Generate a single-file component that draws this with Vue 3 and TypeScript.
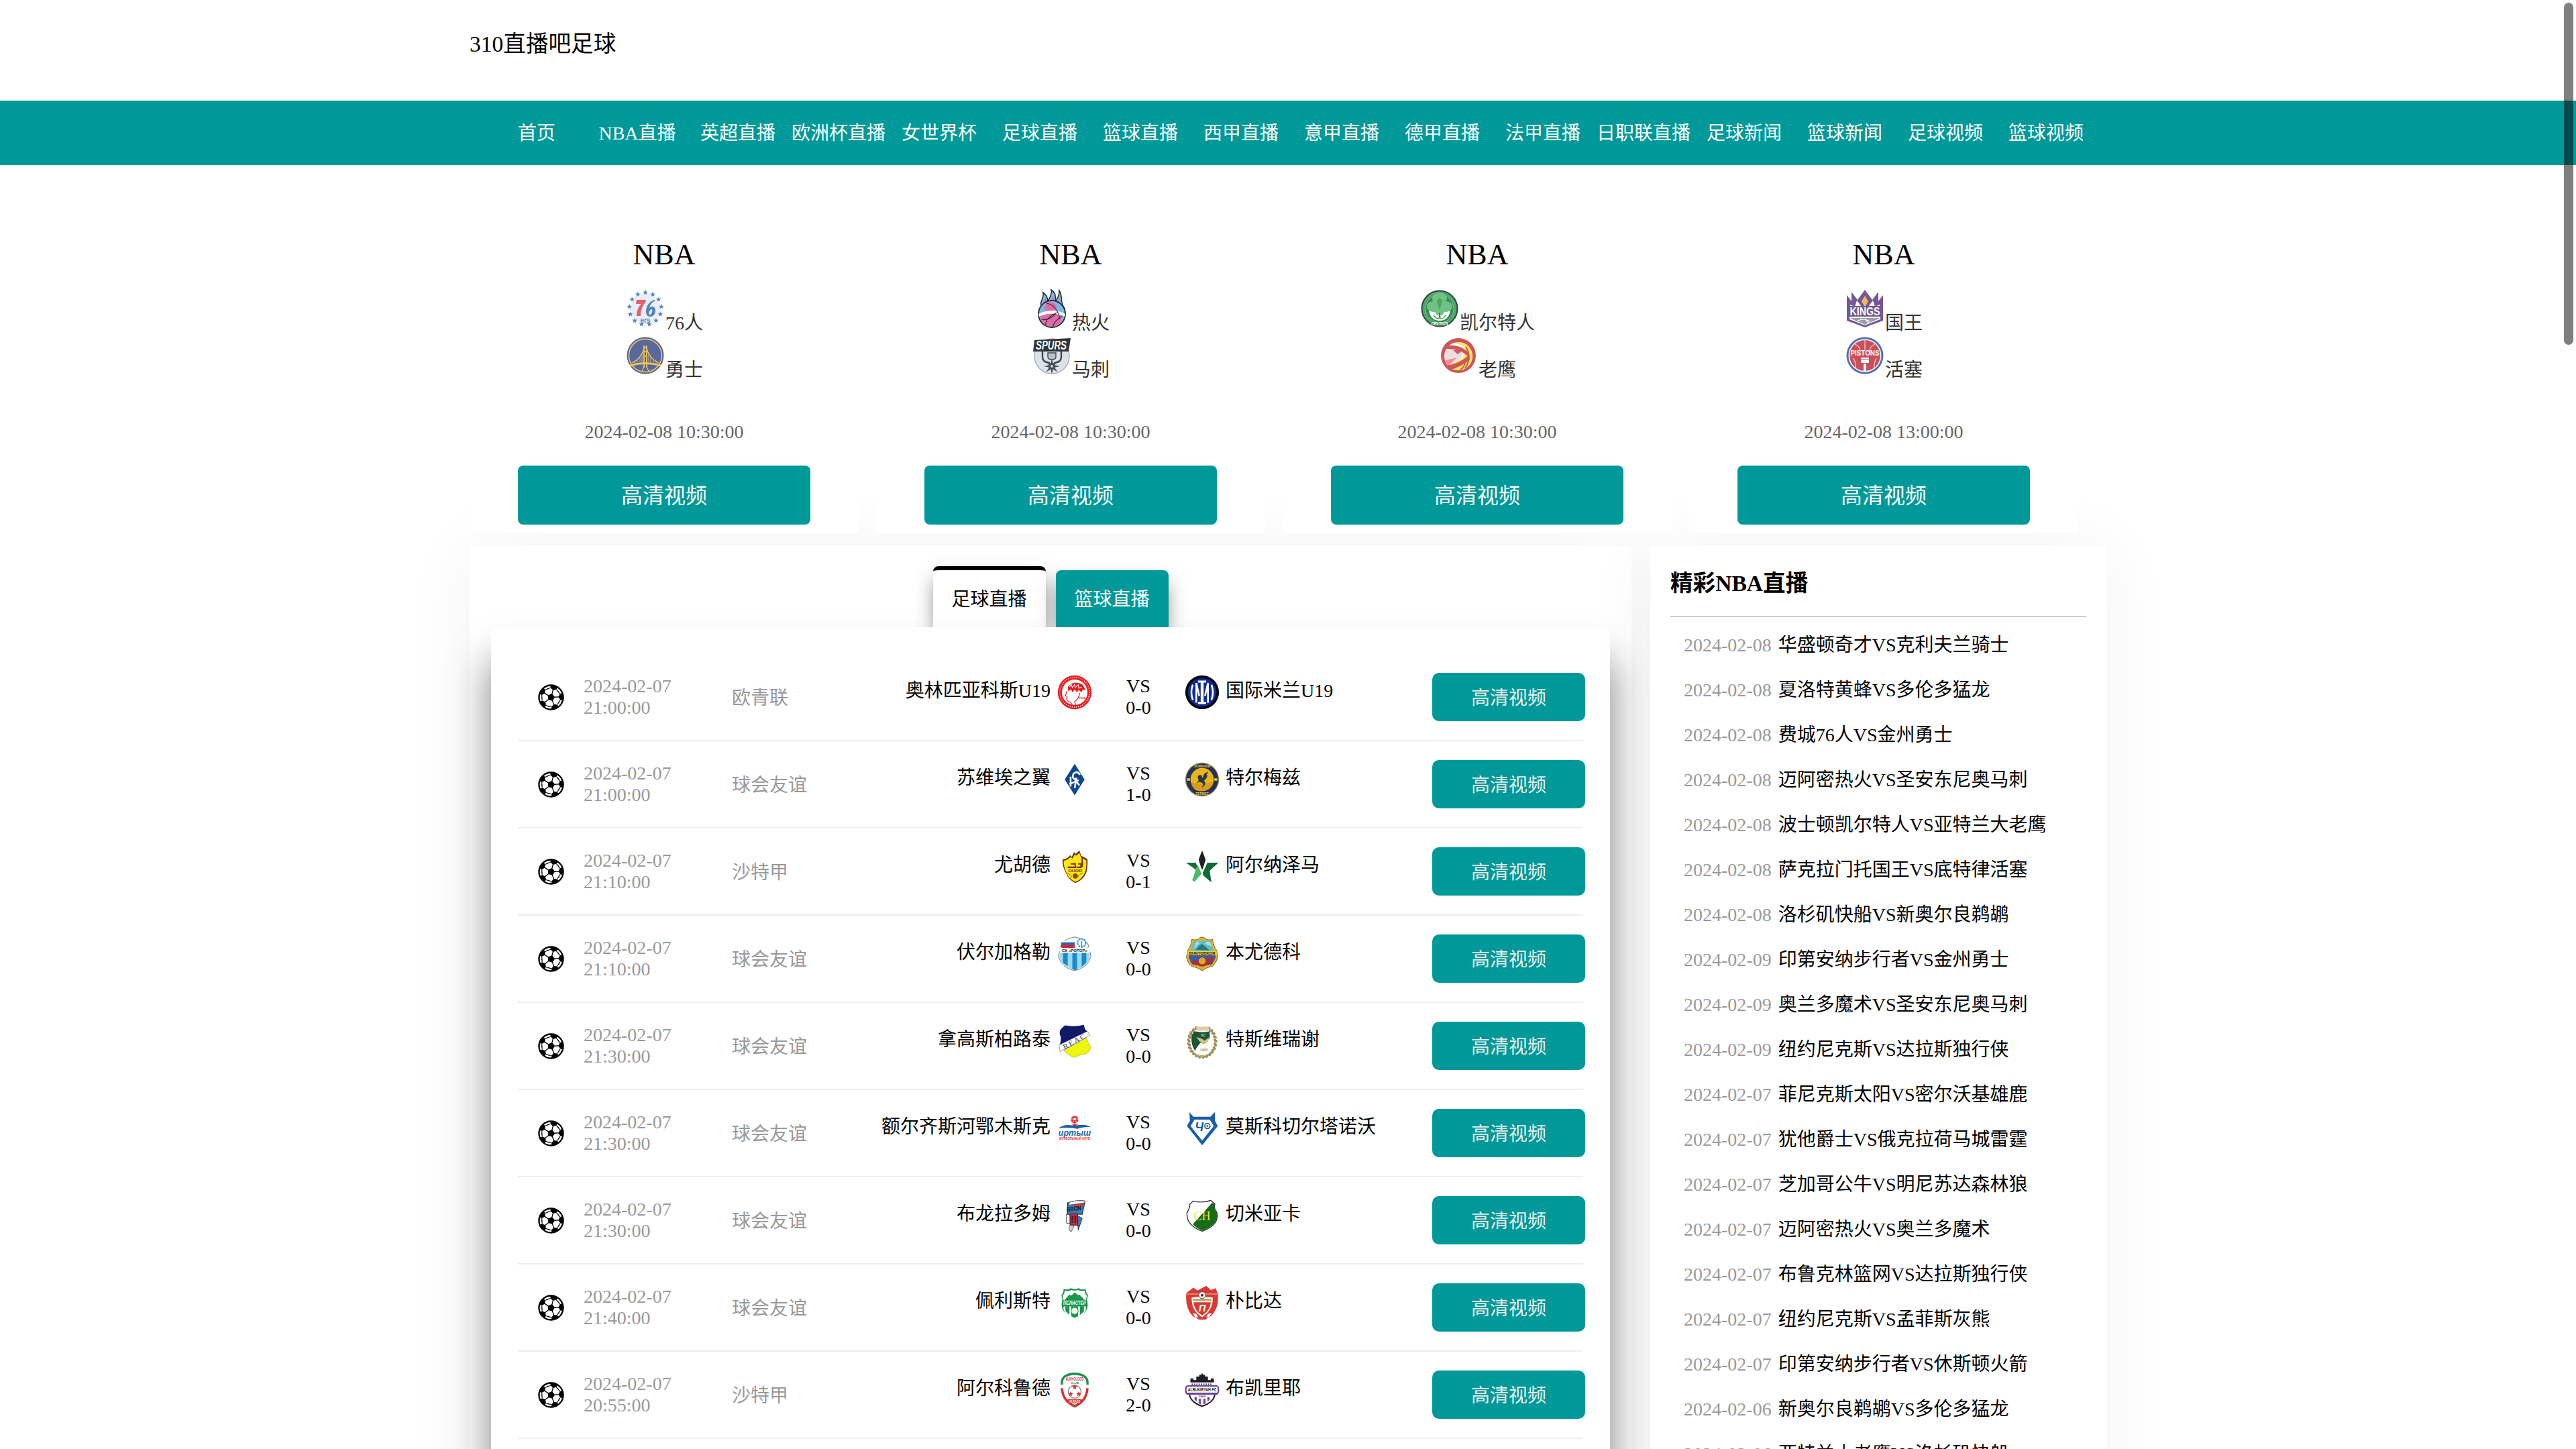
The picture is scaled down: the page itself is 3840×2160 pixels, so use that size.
<script setup lang="ts">
interface FeaturedGame {
  teams: { name: string; crest: string }[]
  time: string
}
interface Match {
  date: string
  time: string
  league: string
  home: string
  homeCrest: string
  score: string
  away: string
  awayCrest: string
}

const navItems: string[] = [
  '首页', 'NBA直播', '英超直播', '欧洲杯直播', '女世界杯', '足球直播', '篮球直播', '西甲直播',
  '意甲直播', '德甲直播', '法甲直播', '日职联直播', '足球新闻', '篮球新闻', '足球视频', '篮球视频',
]

const featured: FeaturedGame[] = [
  { teams: [{ name: '76人', crest: 'sixers' }, { name: '勇士', crest: 'warriors' }], time: '2024-02-08 10:30:00' },
  { teams: [{ name: '热火', crest: 'heat' }, { name: '马刺', crest: 'spurs' }], time: '2024-02-08 10:30:00' },
  { teams: [{ name: '凯尔特人', crest: 'celtics' }, { name: '老鹰', crest: 'hawks' }], time: '2024-02-08 10:30:00' },
  { teams: [{ name: '国王', crest: 'kings' }, { name: '活塞', crest: 'pistons' }], time: '2024-02-08 13:00:00' },
]

const day = '2024-02-07'
const matches: Match[] = [
  { date: day, time: '21:00:00', league: '欧青联', home: '奥林匹亚科斯U19', homeCrest: 'olympiacos', score: '0-0', away: '国际米兰U19', awayCrest: 'inter' },
  { date: day, time: '21:00:00', league: '球会友谊', home: '苏维埃之翼', homeCrest: 'krylia', score: '1-0', away: '特尔梅兹', awayCrest: 'surkhon' },
  { date: day, time: '21:10:00', league: '沙特甲', home: '尤胡德', homeCrest: 'ohod', score: '0-1', away: '阿尔纳泽马', awayCrest: 'najma' },
  { date: day, time: '21:10:00', league: '球会友谊', home: '伏尔加格勒', homeCrest: 'rotor', score: '0-0', away: '本尤德科', awayCrest: 'bunyodkor' },
  { date: day, time: '21:30:00', league: '球会友谊', home: '拿高斯柏路泰', homeCrest: 'reac', score: '0-0', away: '特斯维瑞谢', awayCrest: 'legion' },
  { date: day, time: '21:30:00', league: '球会友谊', home: '额尔齐斯河鄂木斯克', homeCrest: 'irtysh', score: '0-0', away: '莫斯科切尔塔诺沃', awayCrest: 'chertanovo' },
  { date: day, time: '21:30:00', league: '球会友谊', home: '布龙拉多姆', homeCrest: 'bron', score: '0-0', away: '切米亚卡', awayCrest: 'chelm' },
  { date: day, time: '21:40:00', league: '球会友谊', home: '佩利斯特', homeCrest: 'pelister', score: '0-0', away: '朴比达', awayCrest: 'pobeda' },
  { date: day, time: '20:55:00', league: '沙特甲', home: '阿尔科鲁德', homeCrest: 'kholood', score: '2-0', away: '布凯里耶', awayCrest: 'bukiryah' },
]

const schedule: [string, string][] = [
  ['2024-02-08', '华盛顿奇才VS克利夫兰骑士'],
  ['2024-02-08', '夏洛特黄蜂VS多伦多猛龙'],
  ['2024-02-08', '费城76人VS金州勇士'],
  ['2024-02-08', '迈阿密热火VS圣安东尼奥马刺'],
  ['2024-02-08', '波士顿凯尔特人VS亚特兰大老鹰'],
  ['2024-02-08', '萨克拉门托国王VS底特律活塞'],
  ['2024-02-08', '洛杉矶快船VS新奥尔良鹈鹕'],
  ['2024-02-09', '印第安纳步行者VS金州勇士'],
  ['2024-02-09', '奥兰多魔术VS圣安东尼奥马刺'],
  ['2024-02-09', '纽约尼克斯VS达拉斯独行侠'],
  ['2024-02-07', '菲尼克斯太阳VS密尔沃基雄鹿'],
  ['2024-02-07', '犹他爵士VS俄克拉荷马城雷霆'],
  ['2024-02-07', '芝加哥公牛VS明尼苏达森林狼'],
  ['2024-02-07', '迈阿密热火VS奥兰多魔术'],
  ['2024-02-07', '布鲁克林篮网VS达拉斯独行侠'],
  ['2024-02-07', '纽约尼克斯VS孟菲斯灰熊'],
  ['2024-02-07', '印第安纳步行者VS休斯顿火箭'],
  ['2024-02-06', '新奥尔良鹈鹕VS多伦多猛龙'],
  ['2024-02-06', '亚特兰大老鹰VS洛杉矶快船'],
]

const rad = Math.PI / 180

function poly(cx: number, cy: number, r: number, n: number, start = -90, inner = 0): string {
  const pts: string[] = []
  const total = inner ? n * 2 : n
  for (let i = 0; i < total; i++) {
    const radius = inner && i % 2 ? inner : r
    const a = (start + (i * 360) / total) * rad
    pts.push(`${(cx + radius * Math.cos(a)).toFixed(1)},${(cy + radius * Math.sin(a)).toFixed(1)}`)
  }
  return pts.join(' ')
}

function sixersStars(): string {
  let out = ''
  for (let i = 0; i < 13; i++) {
    const a = (-90 + (i * 360) / 13) * rad
    out += `<polygon fill="#4a86c5" points="${poly(30 + 24 * Math.cos(a), 30 + 24 * Math.sin(a), 4, 5, -90, 1.7)}"/>`
  }
  return out
}

function wreath(): string {
  let out = ''
  for (let i = 0; i < 22; i++) {
    const deg = -62 + i * 14.5
    const a = deg * rad
    const x = (30 + 23 * Math.cos(a)).toFixed(1)
    const y = (31 + 26 * Math.sin(a)).toFixed(1)
    out += `<ellipse cx="${x}" cy="${y}" rx="3.6" ry="2" fill="#a09256" stroke="#857842" stroke-width=".6" transform="rotate(${deg + 50} ${x} ${y})"/>`
  }
  return out
}

const label = (x: number, y: number, size: number, fill: string, text: string, extra = ''): string =>
  `<text x="${x}" y="${y}" font-size="${size}" fill="${fill}" text-anchor="middle" font-family="Liberation Sans, sans-serif" font-weight="700" ${extra}>${text}</text>`

const crests: Record<string, string> = {
  sixers:
    `<circle cx="30" cy="30" r="23" fill="#ececf3"/>${sixersStars()}` +
    `<path d="M17 17h14l-1 4c-5 6-7 12-7 20h-6c0-8 3-14 7-18h-8z" fill="#e0606c"/>` +
    `<path d="M44 17c-7 1-13 9-13 17 0 5 2 8 6 8 5 0 8-4 8-9 0-4-2-6-5-6-2 0-3 1-4 2 1-5 4-9 8-10zM38 31c2 0 3 1 2 4s-2 4-3 4c-2 0-2-2-1-5z" fill="#4a86c5" fill-rule="evenodd"/>` +
    label(30, 51, 10, '#4a86c5', 'ers'),
  warriors:
    '<circle cx="30" cy="30" r="27.5" fill="#56689c"/><circle cx="30" cy="30" r="24.5" fill="none" stroke="#ecc45e" stroke-width="1.6"/>' +
    '<g fill="none" stroke="#ecc45e"><path d="M10 41Q25 34 29 16M50 41Q35 34 31 16" stroke-width="1.3"/><path d="M28 15v33M32 15v33" stroke-width="1.8"/><path d="M28 18h4M28 24h4M28 31h4" stroke-width="1.5"/><path d="M7 45Q30 38 53 45" stroke-width="3"/><path d="M14 40v2M18 37v5M22 33v8M25 28v12M46 40v2M42 37v5M38 33v8M35 28v12" stroke-width=".8"/><path d="M25 53l4-8M35 53l-4-8" stroke-width="1.4"/></g>',
  heat:
    '<path d="M15 30C10 19 19 16 17 6c6 4 7 10 7 14 2-7 7-10 5-18 7 4 7 12 6 17 3-3 6-8 6-16 6 9 0 16 8 27z" fill="#77bce6" stroke="#2f3138" stroke-width="1.6"/>' +
    '<path d="M17 27c-2-7 3-9 3-13 4 5 3 10 4 13 2-7 8-11 7-18 4 8 1 14 2 18 4-3 6-8 8-13 0 7 0 11 3 15z" fill="#df6aa6"/>' +
    '<circle cx="30" cy="38" r="20" fill="#77bce6" stroke="#2f3138" stroke-width="2"/><path d="M12 39a18 18 0 0 0 32 11V37H12z" fill="#df6aa6"/><circle cx="28" cy="29" r="9" fill="#df6aa6"/><path d="M10 38Q30 28 50 38L49 42Q30 33 11 42z" fill="#fff"/>' +
    '<path d="M21 56q-2-12 17-20M31 58q2-10 15-17M15 46q10 3 21-9M22 22q16 3 20 24" fill="none" stroke="#2f3138" stroke-width="1.2"/>',
  spurs:
    '<circle cx="30" cy="31" r="26" fill="#dce2e7" stroke="#9aa3ab" stroke-width="1.2"/><path d="M16 24v8q0 8 10 9l1 5M44 24v8q0 8-10 9l-1 5" fill="none" stroke="#3e474e" stroke-width="2.4"/><path d="M24 26v6q0 4 6 4t6-4v-6z" fill="#b9c3cb" stroke="#3e474e" stroke-width="1.4"/>' +
    `<polygon points="${poly(30, 46, 12, 8, -90, 4.5)}" fill="#454e56"/><circle cx="30" cy="46" r="2" fill="#cbd2d8"/><path d="M4 7l54-3-3 20H2z" fill="#2e3439"/>` +
    label(29, 21, 18, '#fff', 'SPURS', 'font-style="italic" textLength="46" lengthAdjust="spacingAndGlyphs"'),
  celtics:
    '<circle cx="30" cy="30" r="26.5" fill="#4fa765" stroke="#33444a" stroke-width="2"/><circle cx="30" cy="30" r="21" fill="#378b50" stroke="#8cc99a" stroke-width=".8"/><path d="M14 32h32q-2 16-16 16T14 32z" fill="#fff"/>' +
    '<g fill="#6fc283"><ellipse cx="30" cy="15" rx="11" ry="9"/><ellipse cx="21" cy="27" rx="10" ry="8"/><ellipse cx="39" cy="27" rx="10" ry="8"/><path d="M20 30h20l-6 10h-8z"/></g><path d="M26 18l4-4 4 4-4 15z" fill="#45975a" opacity=".7"/><path d="M21 40q5 6 8 5l1-9 1 9q4 1 8-5" stroke="#378b50" stroke-width="1.3" fill="none"/>' +
    label(30, 54.5, 7, '#fff', 'CELTICS', 'textLength="25" lengthAdjust="spacingAndGlyphs"'),
  hawks:
    '<circle cx="30" cy="30" r="26" fill="#cf555b"/><circle cx="30" cy="31" r="21" fill="#fff"/><path d="M30 10a21 21 0 1 1-18 32l24-7 5-15q-4-7-18-8z" fill="#f4e957"/><path d="M10 24q11-9 28-2l-3 12-20 13q-7-9-5-23z" fill="#efdde0"/><path d="M22 22l14-1-3 4-4 3z" fill="#d45b62"/><path d="M10 38q10-4 17-4l-13 12z" fill="#ef8c92"/>' +
    '<path d="M15 15q17-2 31 11l-2 5Q32 19 12 20zM12 45q20-3 34-16l1 7Q35 47 18 51z" fill="#cf555b"/><path d="M41 17q10 15-1 32M33 51q6-3 7-12" stroke="#cf555b" stroke-width="2" fill="none"/>',
  kings:
    '<path d="M3 22V10l7 9V5l9 12L30 2l11 15 9-12v14l7-9v38L30 58 3 48z" fill="#755796"/><path d="M8 28v-4l7 3 3-9 7 9h10l7-9 3 9 7-3v4z" fill="#fff"/><path d="M30 11l5 8-5 9-5-9z" fill="#edbd59"/><path d="M7 41h46v5L30 55 7 46z" fill="#fff"/><path d="M6 26h48v16H6z" fill="#755796"/>' +
    label(30, 40, 17, '#fff', 'KINGS', 'textLength="45" lengthAdjust="spacingAndGlyphs"') +
    '<path d="M9 44h42v1L30 54 9 45z" fill="#9aa1a8"/><path d="M19 49q7-6 19 0M31 45q1 4 5 6" fill="none" stroke="#fff" stroke-width="1.2"/>',
  pistons:
    '<circle cx="30" cy="30" r="27.5" fill="#5270ae"/><circle cx="30" cy="30" r="24.5" fill="#fff"/><circle cx="30" cy="30" r="23" fill="#c9505a"/><path d="M30 6v16M15 13q8 4 8 10M45 13q-8 4-8 10M13 34q4 8 3 14M47 34q-4 8-3 14" fill="none" stroke="#f5d6d8" stroke-width="1.2"/>' +
    label(30, 30, 11, '#fff', 'PISTONS', 'textLength="43" lengthAdjust="spacingAndGlyphs"') +
    '<path d="M24 33h12v8H24zM28 42h4v11h-4z" fill="#fff"/><path d="M24 36h12" stroke="#c9505a"/>',
  olympiacos:
    '<circle cx="30" cy="30" r="29" fill="#f4161b"/><circle cx="30" cy="30" r="25.5" fill="none" stroke="#fff" stroke-width="1.6" stroke-dasharray="1.6 2"/><circle cx="30" cy="30" r="22" fill="#fff"/>' +
    '<path d="M18 21Q28 8 44 17l5 10-5-2-2 5-5-4-3 4-4-5-4 5-2-5-5 3z" fill="#f4161b"/><path d="M17 28l-3 8 3 1-1 4 3 5 4 1 3 5M39 31q-3 12-9 15l2 6" stroke="#f4161b" fill="none" stroke-width="1.3"/><path d="M21 21l3-5 2 6 4-6 1 6 5-5 1 6 5-2" stroke="#fff" fill="none" stroke-width="1.2"/>' +
    label(43, 41, 5, '#f4161b', '1925'),
  inter:
    '<circle cx="30" cy="30" r="29" fill="#05060a"/><circle cx="30" cy="30" r="24.500" fill="#102a9c"/><g fill="none" stroke="#fff"><path d="M30 12v36" stroke-width="5"/><path d="M23 11.500h14M23 48.500h14" stroke-width="3.500"/><path d="M20 48V14l5 22M40 48V14l-5 22" stroke-width="3"/><path d="M14 17q-5 13 0 26M46 17q5 13 0 26" stroke-width="3"/></g>',
  krylia:
    '<path d="M30 3l17 27-17 27-17-27z" fill="#0a4692"/><g fill="none" stroke="#fff" stroke-width="3"><path d="M39 22q-3-6-8-4t-4 9q2 3 6 2"/><path d="M23 25v17M21 38l16-7M29 28l9 12M33 27l-3 18"/></g>',
  surkhon:
    '<circle cx="30" cy="30" r="29" fill="#85834d"/><circle cx="30" cy="30" r="27.5" fill="#263059"/><circle cx="30" cy="30" r="20" fill="#e8b51b"/><path d="M11 35q19 3 38 0-3 14-19 15T11 35z" fill="#d79b17"/>' +
    '<path d="M22 26q3-6 7-3l2 5q1-10 9-11-1 4-3 5 3 0 2 2-2 6-6 8 4 3 1 8l-4 5 2-8-6-3-6 2 4-4-1-5z" fill="#26354a"/>' +
    label(30, 9, 6.5, '#e8d23c', 'SURKHON', 'textLength="28" lengthAdjust="spacingAndGlyphs"') + label(30, 56, 6.5, '#e8d23c', 'TERMEZ', 'textLength="22" lengthAdjust="spacingAndGlyphs"') +
    '<path d="M4 30h5M51 30h5" stroke="#e8d23c" stroke-width="4"/>',
  ohod:
    '<path d="M9 18q10-2 13-8l3 3 4-8 3 3 6-6 3 9 11 6q1 21-5 29-5 8-16 12-12-6-16-17Q9 30 9 18z" fill="#6b2a17"/><path d="M11 20q8-2 12-7l3 3 4-7 3 2 5-5 3 8 9 5q1 18-5 26-5 8-14 11Q20 51 16 41 11 31 11 20z" fill="#f8e80e"/>' +
    '<path d="M18 31h13v-6h-8M33 31h8v-6h-5M43 15v15" fill="none" stroke="#78331a" stroke-width="2.4"/>' +
    label(31, 39, 7, '#78331a', 'OHOD', 'textLength="24" lengthAdjust="spacingAndGlyphs"') +
    '<circle cx="31" cy="46" r="4.500" fill="#8a4a1d"/><path d="M17 42q6-1 8 7M44 41q-6 1-8 7" stroke="#78331a" fill="none" stroke-width=".8"/>',
  najma:
    '<path d="M30 2l6 16-5 16h-2l-5-16z" fill="#231f20"/><path d="M2 23h17l3 7-3 5z" fill="#176f37"/><path d="M22 26l7 16-12 14-4-3z" fill="#4fb86e"/><path d="M58 23H39l-8 18 1 4 14 12-3-20z" fill="#0f6b35"/>',
  rotor:
    '<path d="M6 17Q7 5 30 1q23 4 24 16l-2 4q6 6 6 14-5 18-28 24Q7 53 2 35q0-8 6-14z" fill="#fff" stroke="#596a73" stroke-width="1"/><path d="M8 7h22v5H8z" fill="#f8fbfd"/><path d="M7 10h23v5H7z" fill="#2767ae"/><path d="M6 15h24v5H8z" fill="#d9262e"/><circle cx="42" cy="11" r="7" fill="none" stroke="#2b9ad1" stroke-width="2.5" stroke-dasharray="3 1.5"/><path d="M42 8v12" stroke="#2b9ad1" stroke-width="2"/>' +
    '<path d="M4 28h52v8q-5 17-26 21Q9 52 4 36z" fill="#9bd7f3"/><path d="M10 28h8v23l-8-6zM26 28h8v29l-4 1-4-2zM42 28h8v17l-8 7z" fill="#168bcd"/><path d="M5 20h50v8H5z" fill="#fff"/>' +
    label(30, 26.5, 7, '#222', 'СК «РОТОР»', 'textLength="44" lengthAdjust="spacingAndGlyphs"'),
  bunyodkor:
    '<path d="M12 5q9 2 12-1 6-6 12 0 4 3 12 1 2 13 7 19l2 12q-3 10-10 16-8 0-17 7-10-7-17-7Q5 46 3 36l2-12q6-7 7-19z" fill="#e2b22c" stroke="#6a521a" stroke-width="1"/><path d="M15 8q14 2 15-3 2 5 15 3 1 9 5 17H10q4-8 5-17z" fill="#5cbfd0"/><path d="M19 23l7-8 4-2 6 5 7 6z" fill="#277a7d"/><path d="M20 9l6 1-11 12zM39 9h4l3 8-12-5z" fill="#a7e2ec"/>' +
    '<path d="M7 31h46v6l-6 11-17 3-17-3-6-11z" fill="#3e5ba1"/><path d="M9 43l42-8-5 12-16 5-16-5z" fill="#a33043"/><circle cx="30" cy="42" r="6" fill="#e3a91a"/><path d="M5 25h50v7H5z" fill="#f3cf3a"/>' +
    label(30, 31, 7, '#17130a', 'BUNYODKOR', 'textLength="45" lengthAdjust="spacingAndGlyphs"'),
  reac:
    '<path d="M5 11Q12 3 14 3q14 3 32-1 1 9 6 11L4 37q3-8 2-15-3-4-1-11z" fill="#111a68"/><path d="M52 13l4 7-51 28-2-11z" fill="#fff" stroke="#666d97" stroke-width=".8"/><path d="M11 46l39-22q2 7 8 16-2 9-10 12-9 1-18 6-12-3-19-12z" fill="#eff60c" stroke="#85893c" stroke-width=".6"/>' +
    '<text x="29" y="35" transform="rotate(-29 29 31)" font-size="13" fill="#2b3073" text-anchor="middle" font-family="Liberation Serif, serif" textLength="42">REAC</text>',
  legion:
    `${wreath()}<ellipse cx="30" cy="32" rx="19" ry="24" fill="#fffdf7"/><path d="M17 13q14 3 26 0v13L26 34q-8 10-8 13-8-11-6-27z" fill="#1d5539"/><path d="M20 23q10 2 14 6l9-6-4 9-7 4-6-5z" fill="#cdbf86"/><path d="M20 5h22v7H20z" fill="#d6cfa9"/>` +
    label(32, 22, 6, '#d9cda0', 'SC') + label(33, 47, 6, '#a09256', '1905') + '<path d="M22 53q8 4 16 0" stroke="#a09256" fill="none"/>',
  irtysh:
    `<circle cx="30" cy="15" r="6.5" fill="#e6333a"/><polygon points="${poly(30, 14, 2.4, 5)}" fill="#fff"/><path d="M23 14h4M33 14h4M27 20l1-3M33 20l-1-3" stroke="#fff"/>` +
    '<path d="M2 30q10-8 24-5l4-3 4 3q14-3 24 3-14-1-23 3-15-4-33-1z" fill="#1d5fa8"/><path d="M22 22l16 2-6 2z" fill="#e6333a"/>' +
    label(30, 43, 15, '#1d68b2', 'иртыш', 'font-style="italic" textLength="56" lengthAdjust="spacingAndGlyphs"') +
    label(30, 50, 5.5, '#e6333a', 'ФУТБОЛЬНЫЙ КЛУБ', 'textLength="54" lengthAdjust="spacingAndGlyphs"'),
  chertanovo:
    '<path d="M8 2l7 8h29l8-8v15l5 9-27 33L4 26l5-9z" fill="#1a5daa"/><path d="M17 15h26l7 11-20 25L10 26z" fill="#fff"/>' +
    label(25, 35, 21, '#1a5daa', 'Ч', 'font-style="italic"') +
    '<circle cx="39" cy="26" r="4.500" fill="none" stroke="#1a5daa" stroke-width="2"/><circle cx="39" cy="26" r="1.600" fill="#1a5daa"/>',
  bron:
    '<path d="M18 8q15-5 30-3l-5 23-26-1z" fill="#377bc0" stroke="#182434" stroke-width="1.2"/><path d="M31 8l17-1-4 6-16 2z" fill="#d7353b"/><path d="M21 7q13-4 27-2l-1 3-27 4z" fill="#fff" stroke="#182434" stroke-width=".7"/>' +
    label(29, 22, 11, '#101722', 'BRON', 'transform="rotate(-7 29 20)" textLength="25" lengthAdjust="spacingAndGlyphs"') +
    '<path d="M16 28l6 1v15l-6-1z" fill="#fff" stroke="#182434"/><path d="M22 27h13l1 20-14-1z" fill="#c12b36" stroke="#182434"/><path d="M26 31v12M31 31v12" stroke="#182434" stroke-width="2.4" stroke-dasharray="3 1"/><path d="M35 30l8 5-7 20z" fill="#377bc0" stroke="#182434"/><path d="M21 47l8 1-5 10-4-3z" fill="#ccd1d6" stroke="#333" stroke-width=".8"/>',
  chelm:
    '<path d="M9 10l6-5q14 4 30-1l7 6q-3 7 3 14 6 22-25 33-28-10-26-32 5-8 5-15z" fill="#fff" stroke="#333" stroke-width="1.6"/><path d="M47 8l5 3q-3 7 3 14 5 19-24 31-11-4-17-11z" fill="#156d17"/>' +
    '<text x="30" y="38" font-size="22" fill="#f0e53b" text-anchor="middle" font-family="Liberation Serif, serif" textLength="29" lengthAdjust="spacingAndGlyphs">CH</text>',
  pelister:
    '<path d="M11 6q7 3 12-1 7 3 14 0 5 4 12 1 0 7 4 11l-2 8q5 16-8 25l-13 7-13-7Q4 41 9 25l-2-8q4-4 4-11z" fill="#18974d"/><path d="M13 9q6 2 11-1 6 2 12 0 5 3 11 1 0 6 4 9l-2 8H11l-2-8q4-3 4-9z" fill="#fff"/><path d="M12 26l9-10 3 2 6-6 6 5 2-1 10 10z" fill="#18974d"/>' +
    '<path d="M11 36h38q2 8-7 15l-12 6-12-6q-9-7-7-15z" fill="#fff"/><path d="M14 36h7v15l-7-7zM39 36h7v9l-7 6z" fill="#18974d"/><path d="M24 36h12v17l-6 3-6-3z" fill="#18974d"/><circle cx="30" cy="44" r="6" fill="#e9f7ee" stroke="#18974d"/><path d="M8 27h44v9H8z" fill="#18974d"/>' +
    label(30, 34, 7.5, '#fff', 'ПЕЛИСТЕР', 'textLength="39" lengthAdjust="spacingAndGlyphs"'),
  pobeda:
    '<path d="M3 13l12-9 7 5 15-8 8 7 8-3 4 9q3 25-12 39l-10 6H25L14 53Q0 39 3 13z" fill="#d93a32"/><path d="M4 15h52" stroke="#f7dcd9"/><path d="M12 21q18-3 36 0 2 20-18 34Q11 43 12 21z" fill="#fff"/><path d="M15 29h30q-1 14-15 23Q17 44 15 29z" fill="#d93a32"/><path d="M14 23h32v4H14z" fill="#c5a56a"/>' +
    `<circle cx="30" cy="17" r="6" fill="#eee" stroke="#444"/><polygon points="${poly(30, 17, 2.6, 5)}" fill="#333"/>` +
    label(30, 45, 17, '#fff', 'П', 'font-style="italic"') + '<path d="M14 48l4 7h5l-3-6zM46 48l-4 7h-5l3-6z" fill="#fff"/>',
  kholood:
    '<path d="M8 21Q6 3 30 2q24 1 22 19" fill="none" stroke="#18954a" stroke-width="4"/><path d="M8 27q2 23 22 31Q50 50 52 27" fill="none" stroke="#df2b32" stroke-width="4"/>' +
    label(30, 14, 8, '#df2b32', 'ALKHOLOOD', 'textLength="31" lengthAdjust="spacingAndGlyphs"') + label(30, 20, 5, '#18954a', 'CLUB') +
    '<circle cx="30" cy="33" r="11" fill="#fff" stroke="#777" stroke-width="1.4"/>' +
    `<polygon points="${poly(30, 25, 5, 5, -90, 2)}" fill="#df2b32"/><polygon points="${poly(23, 37, 5, 5, -90, 2)}" fill="#df2b32"/><polygon points="${poly(37, 37, 5, 5, -90, 2)}" fill="#df2b32"/>` +
    '<path d="M17 46h26l-5 7H22z" fill="#df2b32"/>' + label(30, 52, 6, '#fff', 'ALRASS', 'textLength="19" lengthAdjust="spacingAndGlyphs"') + label(30, 57.5, 4.5, '#18954a', '1970'),
  bukiryah:
    '<path d="M10 20V10h5v3h5V7h5V4h3l2-3 2 3h3v3h5v6h5v-3h5v10l2 4H8z" fill="#201d26"/><path d="M9 17h42v7H9z" fill="#fff"/><path d="M12 20h36" stroke="#201d26" stroke-width="2" stroke-dasharray="2 2"/><path d="M9 15h42M8 24h44" stroke="#201d26" stroke-width="1.4"/>' +
    '<path d="M8 36h44q-1 15-22 22Q9 51 8 36z" fill="#fff" stroke="#201d26" stroke-width="2.4"/><path d="M17 42h4v8l-4-3zM24 45h4v10l-4-2zM32 45h4v8l-4 2zM39 42h4v5l-4 3z" fill="#7a4aa8"/><rect x="2" y="23" width="56" height="14" rx="4" fill="#fff" stroke="#6d3f9d" stroke-width="2.4"/><path d="M3 36h54" stroke="#6d3f9d" stroke-width="3"/>' +
    label(30, 32.5, 8, '#201d26', 'ALBUKIRYAH FC', 'textLength="49" lengthAdjust="spacingAndGlyphs"') + label(30, 43, 5, '#201d26', '1962'),
}

/* Five dark panels around the middle one, each joined to it by a seam. */
const ballAngles = [-75, -3, 69, 141, 213]
</script>

<template>
  <div class="page">
    <header class="site-header">
      <div class="wrap"><a class="site-name">310直播吧足球</a></div>
    </header>

    <nav class="site-nav">
      <ul class="nav-list wrap">
        <li v-for="item in navItems" :key="item">{{ item }}</li>
      </ul>
    </nav>

    <section class="featured wrap">
      <article v-for="(game, i) in featured" :key="i" class="game-card">
        <h2>NBA</h2>
        <div v-for="team in game.teams" :key="team.name" class="game-team">
          <svg viewBox="0 0 60 60" v-html="crests[team.crest]"></svg>
          <span>{{ team.name }}</span>
        </div>
        <p class="game-time">{{ game.time }}</p>
        <a class="game-button">高清视频</a>
      </article>
    </section>

    <div class="columns wrap">
      <main class="live">
        <div class="tabs">
          <a class="tab active">足球直播</a>
          <a class="tab">篮球直播</a>
        </div>
        <div class="match-list">
          <div v-for="match in matches" :key="match.home" class="match">
            <svg class="ball" viewBox="0 0 40 40">
              <circle cx="20" cy="20" r="18.5" fill="#fff" stroke="#000" stroke-width="2.4" />
              <polygon :points="poly(20, 20, 5.8, 5, -75)" />
              <g v-for="angle in ballAngles" :key="angle" :transform="`rotate(${angle} 20 20)`">
                <path d="M25 20h7" stroke="#000" stroke-width="1.3" />
                <path d="M31.200 20l2.600-4.600 4.200-1.400q1.600 6 0 12l-4.200-1.400z" />
                <path d="M33.800 15.400l-3.200-4.800M33.800 24.600l-3.200 4.800" stroke="#000" stroke-width="1.100" />
              </g>
            </svg>
            <div class="when">{{ match.date }}<br />{{ match.time }}</div>
            <div class="league">{{ match.league }}</div>
            <div class="side home">
              <span>{{ match.home }}</span>
              <svg viewBox="0 0 60 60" v-html="crests[match.homeCrest]"></svg>
            </div>
            <div class="score">VS<br />{{ match.score }}</div>
            <div class="side away">
              <svg viewBox="0 0 60 60" v-html="crests[match.awayCrest]"></svg>
              <span>{{ match.away }}</span>
            </div>
            <a class="watch">高清视频</a>
          </div>
        </div>
      </main>

      <aside class="sidebar">
        <h3>精彩NBA直播</h3>
        <ul>
          <li v-for="([date, title], i) in schedule" :key="i">
            <time>{{ date }}</time><a>{{ title }}</a>
          </li>
        </ul>
      </aside>
    </div>

    <div class="scroll-thumb"></div>
  </div>
</template>

<style>
body {
  margin: 0;
  overflow: hidden;
}
</style>

<style scoped>
.page {
  position: relative;
  width: 3840px;
  height: 2160px;
  overflow: hidden;
  background: #fff;
  color: #000;
  font: 28px/32px "Liberation Serif", "Noto Sans CJK SC", serif;
}
ul {
  margin: 0;
  padding: 0;
  list-style: none;
}
svg {
  overflow: visible;
}
.wrap {
  box-sizing: border-box;
  width: 2440px;
  margin: 0 auto;
}
.site-header {
  box-sizing: border-box;
  height: 150px;
  padding-top: 46px;
}
.site-name {
  display: block;
  font-size: 33.6px;
  line-height: 40px;
}
.site-nav {
  height: 96px;
  background: #099;
  color: #fff;
}
.nav-list {
  display: flex;
  padding-left: 25px;
}
.nav-list li {
  flex: 0 0 150px;
  text-align: center;
  line-height: 98px;
  height: 96px;
  white-space: nowrap;
}

.featured {
  position: relative;
  z-index: 1;
  display: flex;
  gap: 26px;
  margin-bottom: 20px;
}
.game-card {
  box-sizing: border-box;
  flex: none;
  width: 580px;
  padding: 109px 72px 12px;
  background: #fff;
  text-align: center;
}
.game-card h2 {
  margin: 0 0 25px;
  font-size: 44px;
  font-weight: 400;
  line-height: 50px;
}
.game-team {
  display: flex;
  justify-content: center;
  height: 70px;
  color: #333;
}
.game-team svg {
  flex: none;
  width: 60px;
  height: 60px;
}
.game-team span {
  margin-top: 36px;
}
.game-time {
  margin: 58px 0 34px;
  color: #666;
}
.game-button {
  display: block;
  height: 88px;
  border-radius: 8px;
  background: #099;
  color: #fff;
  font-size: 32px;
  line-height: 91px;
}

.columns {
  display: flex;
  align-items: flex-start;
  gap: 28px;
}
.live,
.sidebar {
  height: 1500px;
  background: #fff;
  box-shadow: 0 0 100px rgba(0, 0, 0, 0.05);
}
.live {
  box-sizing: border-box;
  width: 1732px;
  padding: 30px 32px 0;
}
.tabs {
  display: flex;
  justify-content: center;
  align-items: flex-end;
  gap: 15px;
  height: 91px;
}
.tab {
  width: 168px;
  height: 85px;
  border-radius: 8px 8px 0 0;
  background: #099;
  box-shadow: 0 16px 30px -4px rgba(0, 0, 0, 0.5);
  color: #fff;
  line-height: 88px;
  text-align: center;
}
.tab.active {
  border-top: 6px solid #000;
  background: #fff;
  color: #000;
}
.match-list {
  position: relative;
  height: 1500px;
  padding: 40px 40px 0;
  border-radius: 8px;
  background: #fff;
  box-shadow: 0 50px 60px rgba(0, 0, 0, 0.5);
}
.match {
  box-sizing: border-box;
  display: grid;
  grid-template-columns: 98px 221px 180px 357px 138px 369px 228px;
  align-items: center;
  height: 130px;
  border-bottom: 2px solid #eee;
}
.ball {
  width: 39px;
  height: 39px;
  margin-left: 30px;
}
.when,
.league {
  color: #999;
}
.league {
  padding-top: 4px;
}
.side {
  display: flex;
  align-items: center;
  gap: 10px;
  padding-bottom: 14px;
  white-space: nowrap;
}
.side.home {
  justify-content: flex-end;
}
.side.away {
  gap: 9px;
}
.side span {
  padding-bottom: 4px;
}
.side svg {
  flex: none;
  width: 52px;
  height: 52px;
}
.score {
  text-align: center;
}
.watch {
  height: 72px;
  border-radius: 10px;
  background: #099;
  color: #eee;
  line-height: 75px;
  text-align: center;
}

.sidebar {
  position: relative;
  box-sizing: border-box;
  width: 680px;
  padding: 0 30px;
}
.sidebar h3 {
  margin: 0 0 8px;
  padding: 36px 0 28px;
  border-bottom: 2px solid #ccc;
  font-size: 33.6px;
  line-height: 40px;
}
.sidebar li {
  padding-left: 20px;
  line-height: 67px;
  white-space: nowrap;
}
.sidebar time {
  margin-right: 10px;
  color: #999;
}

.scroll-thumb {
  position: absolute;
  z-index: 5;
  top: 4px;
  right: 4px;
  width: 14px;
  height: 510px;
  border-radius: 7px;
  background: rgba(0, 0, 0, 0.5);
}
</style>
